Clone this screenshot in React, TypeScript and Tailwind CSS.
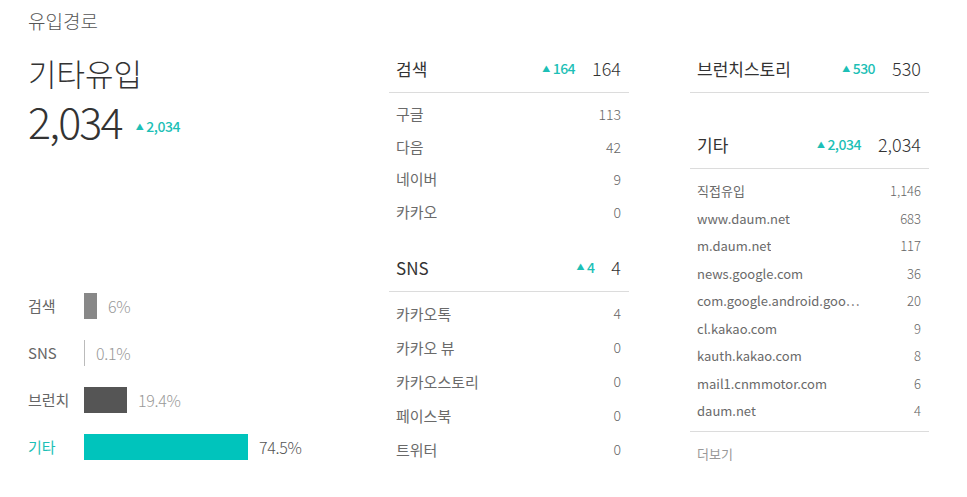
import React from "react";

const font = { fontFamily: '"Noto Sans CJK KR", "Noto Sans", sans-serif' };

function Delta({ value, size = "text-[14px]" }: { value: string; size?: string }) {
  return (
    <span className={`flex items-center text-[#1dbfb6] font-medium tracking-[-0.5px] ${size}`}>
      <span className="text-[8px] mr-[3px] leading-none">▲</span>
      {value}
    </span>
  );
}

function Header({ title, delta, total }: { title: string; delta: string; total: string }) {
  return (
    <div className="flex items-center h-[48px] border-b border-[#dcdcdc] pl-[7px] pr-[8px]">
      <span className="text-[17px] text-[#333] font-normal flex-1">{title}</span>
      <Delta value={delta} />
      <span className="text-[18px] text-[#333] font-light ml-[17px]">{total}</span>
    </div>
  );
}

function Row({ label, value, h, size, vsize }: { label: string; value: string; h: string; size: string; vsize: string }) {
  return (
    <div className={`flex items-center justify-between pl-[7px] pr-[8px] ${h}`}>
      <span className={`${size} text-[#6a6a6a] font-normal truncate`}>{label}</span>
      <span className={`${vsize} text-[#666] font-light`}>{value}</span>
    </div>
  );
}

export default function App() {
  const bars = [
    { label: "검색", w: 13, color: "bg-[#888888]", pct: "6%", lc: "text-[#666]", pc: "text-[#999]" },
    { label: "SNS", w: 1, color: "bg-[#bbbbbb]", pct: "0.1%", lc: "text-[#666]", pc: "text-[#999]" },
    { label: "브런치", w: 43, color: "bg-[#555555]", pct: "19.4%", lc: "text-[#666]", pc: "text-[#999]" },
    { label: "기타", w: 164, color: "bg-[#00c4bc]", pct: "74.5%", lc: "text-[#1dbfb6]", pc: "text-[#555]" },
  ];
  const search = [
    ["구글", "113"],
    ["다음", "42"],
    ["네이버", "9"],
    ["카카오", "0"],
  ];
  const sns = [
    ["카카오톡", "4"],
    ["카카오 뷰", "0"],
    ["카카오스토리", "0"],
    ["페이스북", "0"],
    ["트위터", "0"],
  ];
  const etc = [
    ["직접유입", "1,146"],
    ["www.daum.net", "683"],
    ["m.daum.net", "117"],
    ["news.google.com", "36"],
    ["com.google.android.goo…", "20"],
    ["cl.kakao.com", "9"],
    ["kauth.kakao.com", "8"],
    ["mail1.cnmmotor.com", "6"],
    ["daum.net", "4"],
  ];
  return (
    <div className="w-[967px] h-[497px] bg-white overflow-hidden" style={font}>
      <div className="pl-[28px] pt-[8px] h-[26px] text-[19px] text-[#555] font-light leading-[26px]">유입경로</div>
      <div className="flex">
        {/* left */}
        <div className="w-[389px] shrink-0 pl-[28px] pt-[30px]">
          <div className="text-[31px] leading-[34px] text-[#333] font-light">기타유입</div>
          <div className="flex items-end mt-[8px]">
            <span className="text-[43px] leading-[44px] text-[#333] font-light tracking-[-1.8px]">2,034</span>
            <span className="ml-[14px] mb-[5px]">
              <Delta value="2,034" />
            </span>
          </div>
          <div className="mt-[151px] flex flex-col gap-[21px]">
            {bars.map((b) => (
              <div key={b.label} className="flex items-center h-[26px]">
                <span className={`w-[56px] text-[15px] font-normal ${b.lc}`}>{b.label}</span>
                <div className={`h-[26px] ${b.color}`} style={{ width: b.w }} />
                <span className={`ml-[11px] text-[16px] font-light tracking-[-0.3px] ${b.pc}`}>{b.pct}</span>
              </div>
            ))}
          </div>
        </div>
        {/* middle */}
        <div className="w-[240px] shrink-0 pt-[19px]">
          <Header title="검색" delta="164" total="164" />
          <div className="pt-[5px]">
            {search.map(([l, v]) => (
              <Row key={l} label={l} value={v} h="h-[32.7px]" size="text-[15px]" vsize="text-[14px]" />
            ))}
          </div>
          <div className="mt-[15px]">
            <Header title="SNS" delta="4" total="4" />
          </div>
          <div className="pt-[5px]">
            {sns.map(([l, v]) => (
              <Row key={l} label={l} value={v} h="h-[34px]" size="text-[15px]" vsize="text-[14px]" />
            ))}
          </div>
        </div>
        {/* right */}
        <div className="w-[239px] shrink-0 ml-[61px] pt-[19px]">
          <Header title="브런치스토리" delta="530" total="530" />
          <div className="mt-[28px]">
            <Header title="기타" delta="2,034" total="2,034" />
          </div>
          <div className="pt-[8px] pb-[6px] border-b border-[#dcdcdc]">
            {etc.map(([l, v]) => (
              <Row key={l} label={l} value={v} h="h-[27.5px]" size="text-[13px]" vsize="text-[13px]" />
            ))}
          </div>
          <div className="pl-[7px] pt-[12px] text-[13px] text-[#999] font-normal">더보기</div>
        </div>
      </div>
    </div>
  );
}
